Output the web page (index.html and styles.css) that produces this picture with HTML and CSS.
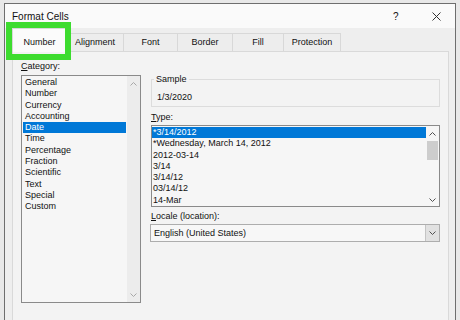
FILE: index.html
```html
<!DOCTYPE html>
<html lang="en">
<head>
    <meta charset="UTF-8">
    <title>Format Cells</title>
    <link rel="stylesheet" href="styles.css">
</head>
<body>

    <div class="dialog">
        <div class="titlebar">
            <span class="title">Format Cells</span>
            <span class="help">?</span>
            <svg class="close" width="9" height="9" viewBox="0 0 9 9">
                <path d="M0.5 0.5 L8.5 8.5 M8.5 0.5 L0.5 8.5" stroke="#333" stroke-width="1" fill="none"/>
            </svg>
        </div>

        <div class="tabs">
            <div class="tab active">Number</div>
            <div class="tab w57">Alignment</div>
            <div class="tab w54">Font</div>
            <div class="tab w55">Border</div>
            <div class="tab w51">Fill</div>
            <div class="tab w57">Protection</div>
        </div>

        <div class="panel">
            <div class="category">
                <div class="label"><u>C</u>ategory:</div>
                <div class="list cat-list">
                    <div class="items">
                        <div class="item">General</div>
                        <div class="item">Number</div>
                        <div class="item">Currency</div>
                        <div class="item">Accounting</div>
                        <div class="item selected">Date</div>
                        <div class="item">Time</div>
                        <div class="item">Percentage</div>
                        <div class="item">Fraction</div>
                        <div class="item">Scientific</div>
                        <div class="item">Text</div>
                        <div class="item">Special</div>
                        <div class="item">Custom</div>
                    </div>
                    <div class="scroll light">
                        <svg width="7" height="4" viewBox="0 0 7 4"><path d="M0.5 3.5 L3.5 0.5 L6.5 3.5" fill="none" stroke="#a8a8a8"/></svg>
                        <svg width="7" height="4" viewBox="0 0 7 4"><path d="M0.5 0.5 L3.5 3.5 L6.5 0.5" fill="none" stroke="#a8a8a8"/></svg>
                    </div>
                </div>
            </div>

            <div class="detail">
                <fieldset class="sample">
                    <legend>Sample</legend>
                    <div>1/3/2020</div>
                </fieldset>

                <div class="label"><u>T</u>ype:</div>
                <div class="list type-list">
                    <div class="items">
                        <div class="item selected">*3/14/2012</div>
                        <div class="item">*Wednesday, March 14, 2012</div>
                        <div class="item">2012-03-14</div>
                        <div class="item">3/14</div>
                        <div class="item">3/14/12</div>
                        <div class="item">03/14/12</div>
                        <div class="item">14-Mar</div>
                    </div>
                    <div class="scroll">
                        <span class="arrow">
                            <svg width="7" height="4" viewBox="0 0 7 4"><path d="M0.5 3.5 L3.5 0.5 L6.5 3.5" fill="none" stroke="#505050"/></svg>
                        </span>
                        <span class="thumb"></span>
                        <span class="arrow down">
                            <svg width="7" height="4" viewBox="0 0 7 4"><path d="M0.5 0.5 L3.5 3.5 L6.5 0.5" fill="none" stroke="#505050"/></svg>
                        </span>
                    </div>
                </div>

                <div class="label"><u>L</u>ocale (location):</div>
                <div class="select">
                    <span>English (United States)</span>
                    <span class="drop">
                        <svg width="7" height="4" viewBox="0 0 7 4"><path d="M0.5 0.5 L3.5 3.5 L6.5 0.5" fill="none" stroke="#505050"/></svg>
                    </span>
                </div>
            </div>
        </div>

        <!-- green callout round the Number tab -->
        <div class="callout"></div>
    </div>

</body>
</html>
```

FILE: styles.css
```css
body {
    margin: 0;
    background: #e8e8e8;
    font-family: "Liberation Sans", Arial, sans-serif;
    font-size: 9px;
    color: #111;
    overflow: hidden;
}
.dialog {
    position: relative;
    margin: 3px 0 0 4px;
    width: 450px;
    height: 316px;
    border: 1px solid #6e6e6e;
    border-bottom: none;
    background: #eeeeee;
}
.titlebar {
    height: 24px;
    display: flex;
    align-items: center;
    padding-left: 7px;
    background: #fafafa;
}
.title {
    font-size: 10px;
    color: #111;
    flex: 1;
}
.help {
    font-size: 10px;
    width: 10px;
    margin-right: 29px;
}
.close {
    margin-right: 14px;
}
.tabs {
    height: 23px;
    display: flex;
    align-items: flex-end;
    padding-left: 7px;
}
.tab {
    height: 17px;
    line-height: 17px;
    text-align: center;
    color: #111;
    border: 1px solid #d8d8d8;
    border-bottom: none;
    border-left: none;
    background: #ededed;
}
.tab.active {
    width: 53px;
    height: 23px;
    line-height: 27px;
    margin-bottom: -1px;
    background: #fbfbfb;
    border-left: 1px solid #d8d8d8;
    position: relative;
}
.w51 { width: 50px; }
.w54 { width: 53px; }
.w55 { width: 54px; }
.w57 { width: 56px; }
.panel {
    margin: 0 6px 0 7px;
    height: 260px;
    border: 1px solid #d9d9d9;
    border-bottom: none;
    background: #f3f3f3;
    display: flex;
    padding: 8px 0 0 8px;
}
.label {
    line-height: 12px;
    height: 12px;
}
.category {
    width: 120px;
}
.list {
    display: flex;
    box-sizing: border-box;
    border: 1px solid #8a8a8a;
    background: #f6f6f6;
    margin-top: 2px;
}
.cat-list {
    margin-top: 3px;
    height: 228px;
}
.items {
    flex: 1;
    padding: 1px;
}
.item {
    height: 11.3px;
    line-height: 11.3px;
    padding-left: 2px;
    white-space: nowrap;
}
.item.selected {
    background: #0078d7;
    color: #fff;
}
.type-list .items {
    padding: 1px 0 0 0;
}
.type-list .item {
    padding-left: 1px;
}
.scroll {
    width: 13px;
    display: flex;
    flex-direction: column;
    align-items: center;
}
.scroll.light {
    background: #ececec;
    justify-content: space-between;
    padding: 6px 0 5px;
}
.arrow {
    height: 15px;
    display: flex;
    align-items: center;
    justify-content: center;
}
.arrow.down {
    margin-top: auto;
    height: 13px;
}
.thumb {
    width: 11px;
    height: 19px;
    background: #cdcdcd;
}
.detail {
    margin-left: 10px;
    width: 289px;
    padding-top: 13px;
}
.sample {
    margin: 0;
    border: 1px solid #dcdcdc;
    padding: 6px 5px 3px 5px;
    line-height: 12px;
}
.sample legend {
    padding: 0 2px;
    margin-left: -3px;
    line-height: 12px;
}
.sample + .label {
    margin-top: 4px;
}
.type-list {
    height: 82px;
}
.type-list + .label {
    margin-top: 3px;
}
.select {
    margin: 2px 0 0 -1px;
    width: 290px;
    height: 18px;
    box-sizing: border-box;
    border: 1px solid #adadad;
    background: #f7f7f7;
    display: flex;
    align-items: center;
    padding-left: 3px;
}
.select span:first-child {
    flex: 1;
}
.drop {
    width: 13px;
    height: 16px;
    background: #e1e1e1;
    border-left: 1px solid #c4c4c4;
    display: flex;
    align-items: center;
    justify-content: center;
}
.callout {
    position: absolute;
    left: 1px;
    top: 18px;
    width: 65px;
    height: 38px;
    box-sizing: border-box;
    border: 6px solid #3ddc2f;
}
```
